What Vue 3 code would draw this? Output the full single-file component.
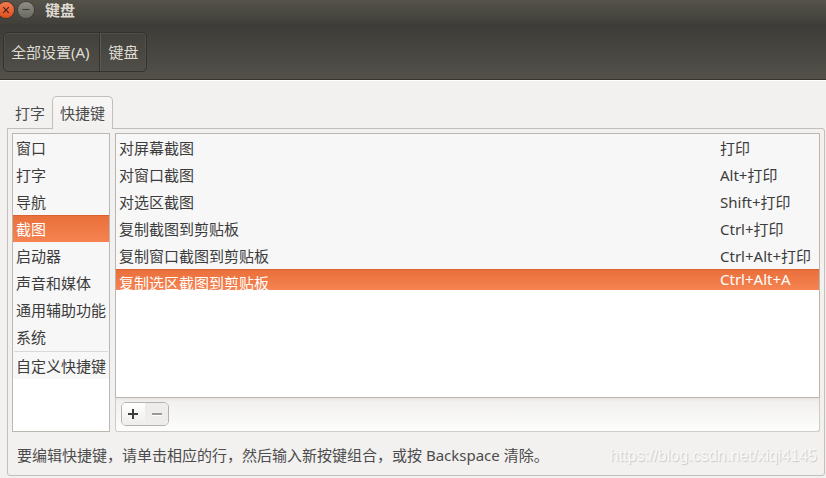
<script setup>
import { ref } from 'vue'

const tabs = ['打字', '快捷键']
const activeTab = ref('快捷键')

const sections = ['窗口', '打字', '导航', '截图', '启动器', '声音和媒体', '通用辅助功能', '系统']
const customSection = '自定义快捷键'
const activeSection = ref('截图')

const shortcuts = [
  { name: '对屏幕截图', keys: '打印' },
  { name: '对窗口截图', keys: 'Alt+打印' },
  { name: '对选区截图', keys: 'Shift+打印' },
  { name: '复制截图到剪贴板', keys: 'Ctrl+打印' },
  { name: '复制窗口截图到剪贴板', keys: 'Ctrl+Alt+打印' },
  { name: '复制选区截图到剪贴板', keys: 'Ctrl+Alt+A', short: true },
]
const activeShortcut = ref(5)
</script>

<template>
  <div class="window">
    <header class="titlebar">
      <button type="button" class="window-button close" aria-label="关闭">
        <svg viewBox="0 0 16 16" width="16" height="16">
          <path d="M5.2 5.2l5.6 5.6M10.8 5.2l-5.6 5.6" stroke="#4b2317" stroke-width="1.2" />
        </svg>
      </button>
      <button type="button" class="window-button minimize" aria-label="最小化">
        <svg viewBox="0 0 16 16" width="16" height="16">
          <path d="M4.5 7.5h7" stroke="#3a3935" stroke-width="1" />
        </svg>
      </button>
      <h1>键盘</h1>
    </header>

    <nav class="toolbar">
      <div class="path-bar">
        <button type="button">全部设置(A)</button>
        <button type="button">键盘</button>
      </div>
    </nav>

    <main class="content">
      <div class="tabs" role="tablist">
        <button
          v-for="tab in tabs"
          :key="tab"
          type="button"
          role="tab"
          class="tab"
          :class="{ active: tab === activeTab }"
          :aria-selected="tab === activeTab"
          @click="activeTab = tab"
        >
          {{ tab }}
        </button>
      </div>

      <section class="panel">
        <div class="columns">
          <div class="sections">
            <button
              v-for="section in sections"
              :key="section"
              type="button"
              class="section"
              :class="{ active: section === activeSection }"
              @click="activeSection = section"
            >
              {{ section }}
            </button>
            <div class="divider"></div>
            <button
              type="button"
              class="section"
              :class="{ active: customSection === activeSection }"
              @click="activeSection = customSection"
            >
              {{ customSection }}
            </button>
          </div>

          <div class="shortcuts">
            <div class="table-area">
              <table>
                <tbody>
                  <tr
                    v-for="(shortcut, index) in shortcuts"
                    :key="shortcut.name"
                    :class="{ active: index === activeShortcut, short: shortcut.short }"
                    @click="activeShortcut = index"
                  >
                    <td class="name"><div>{{ shortcut.name }}</div></td>
                    <td class="keys"><div>{{ shortcut.keys }}</div></td>
                  </tr>
                </tbody>
              </table>
            </div>
            <div class="actions">
              <div class="action-group">
                <button type="button" class="add" aria-label="添加">
                  <svg viewBox="0 0 12 12" width="12" height="12">
                    <path d="M5 1h2v4h4v2H7v4H5V7H1V5h4z" fill="#3c3c3c" />
                  </svg>
                </button>
                <button type="button" class="remove" aria-label="移除" disabled>
                  <svg viewBox="0 0 12 12" width="12" height="12">
                    <path d="M1 5h10v2H1z" fill="#9c9893" />
                    <path d="M1 7h10v1H1z" fill="#ffffff" />
                  </svg>
                </button>
              </div>
            </div>
          </div>
        </div>

        <footer class="hint">
          <p>要编辑快捷键，请单击相应的行，然后输入新按键组合，或按 Backspace 清除。</p>
          <span class="watermark">https://blog.csdn.net/xiqi4145</span>
        </footer>
      </section>
    </main>
  </div>
</template>

<style>
body {
  background: #f2f1f0;
}
</style>

<style scoped>
.window {
  display: flex;
  flex-direction: column;
  box-sizing: border-box;
  min-height: 100vh;
  background: #f2f1f0;
  color: #3c3c3c;
  font-family: "Noto Sans", "Noto Sans CJK SC", sans-serif;
  font-size: 15px;
  line-height: 27px;
}

.window * {
  box-sizing: border-box;
}

button {
  margin: 0;
  padding: 0;
  border: none;
  background: none;
  color: inherit;
  font: inherit;
  white-space: nowrap;
}

svg {
  display: block;
}

.titlebar {
  display: flex;
  align-items: center;
  gap: 4px;
  height: 24px;
  padding-bottom: 4px;
  background: linear-gradient(#55534a, #403f3a);
  color: #dfdbd2;
}

.titlebar h1 {
  margin: 0 0 0 7px;
  font-size: 15px;
  font-weight: 700;
  line-height: 20px;
}

.window-button {
  width: 16px;
  height: 16px;
  border-radius: 50%;
}

.close {
  margin-left: -2px;
  background: linear-gradient(#f37a51, #df4f1d);
  box-shadow: 0 0 0 1px #4a3329;
}

.minimize {
  background: linear-gradient(#8e8c83, #6b6a63);
  box-shadow: 0 0 0 1px #403f3a;
}

.toolbar {
  height: 56px;
  padding: 8px 3px;
  border-bottom: 1px solid #35342f;
  background: linear-gradient(#3c3b37, #53514a);
}

.path-bar {
  display: inline-flex;
  height: 40px;
  border: 1px solid #33322e;
  border-radius: 5px;
  background: linear-gradient(#42413c, #504e48);
  box-shadow: inset 0 0 0 1px #504f49;
  color: #dfdbd2;
}

.path-bar button {
  padding: 0 9px 0 7px;
}

.path-bar button + button {
  padding: 0 7px 0 9px;
  border-left: 1px solid #33322e;
  box-shadow: inset 1px 0 #5c5a53;
}

.content {
  display: flex;
  flex: 1;
  flex-direction: column;
  padding: 15px 1px 2px 7px;
  border-top: 1px solid #ffffff;
}

.tabs {
  display: flex;
  align-items: flex-end;
  margin-bottom: -1px;
}

.tab {
  height: 31px;
  padding: 0 8px 1px;
  color: #4c4c4c;
}

.tab.active {
  position: relative;
  height: 33px;
  margin-left: -1px;
  padding: 1px 7px 0;
  border: 1px solid #c3beb9;
  border-bottom: none;
  border-radius: 5px 5px 0 0;
  background: linear-gradient(#f7f6f5, #f2f1f0);
}

.panel {
  display: flex;
  flex: 1;
  flex-direction: column;
  padding: 4px;
  border: 1px solid #c3beb9;
  border-radius: 0 3px 3px 3px;
}

.columns {
  display: flex;
  flex: 1;
  gap: 5px;
}

.sections {
  display: flex;
  flex-direction: column;
  border: 1px solid #bbb6b0;
  background: #ffffff;
}

.section {
  height: 27px;
  padding: 1px 3px 0;
  background: #f7f7f7;
  text-align: left;
}

.divider {
  height: 3px;
  border: 1px solid #f7f7f7;
  border-bottom: none;
  background: linear-gradient(#d9d9d9 50%, #f7f7f7 50%);
}

.divider + .section {
  height: 26px;
  padding-top: 0;
}

.section.active,
tr.active {
  background: linear-gradient(#e96f3a, #f58351);
  box-shadow: inset 0 1px #db6230;
  color: #ffffff;
}

.shortcuts {
  display: flex;
  flex: 1;
  flex-direction: column;
}

.table-area {
  flex: 1;
  border: 1px solid #bbb6b0;
  background: #ffffff;
}

table {
  width: 100%;
  border-collapse: collapse;
}

tr {
  background: #f7f7f7;
}

td {
  padding: 0 3px;
}

td div {
  height: 27px;
  padding-top: 1px;
  overflow: hidden;
  white-space: nowrap;
}

.keys {
  width: 102px;
}

.short td div {
  height: 21px;
}

.short .keys div {
  padding-top: 0;
  line-height: 21px;
}

.actions {
  height: 34px;
  padding: 4px 5px;
  border: 1px solid #cfccc8;
  border-top: none;
  border-radius: 0 0 3px 3px;
  background: linear-gradient(#e8e6e4, #f2f1ef 4px, #fdfdfd);
}

.action-group {
  display: flex;
  width: 48px;
  height: 24px;
  overflow: hidden;
  border: 1px solid #b5b1ac;
  border-radius: 5px;
}

.action-group button {
  display: flex;
  align-items: center;
  justify-content: center;
  width: 23px;
}

.action-group .add {
  padding-right: 1px;
  background: linear-gradient(#ffffff, #eeedeb);
}

.remove {
  background: #eeedec;
}

.hint {
  display: flex;
  align-items: center;
  justify-content: space-between;
  height: 39px;
  padding: 8px 3px 0 5px;
  color: #4c4c4c;
}

.hint p {
  margin: 0;
}

.watermark {
  color: #f8f8f8;
  font-family: "Liberation Sans", Arial, sans-serif;
  font-size: 16px;
  text-shadow: 1px 1px 1px #c8c8c8;
}
</style>
